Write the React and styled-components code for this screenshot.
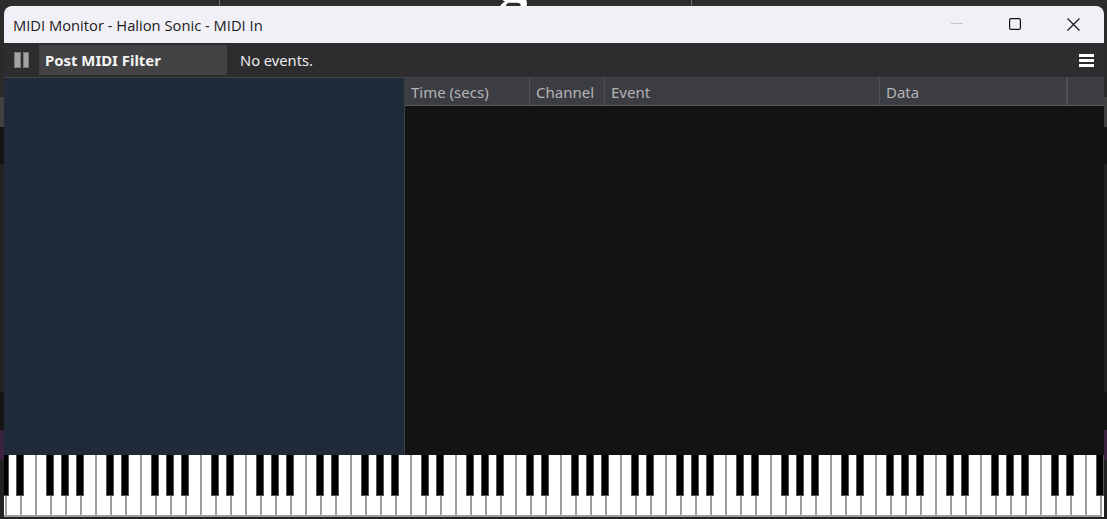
import React from 'react'
import styled, { createGlobalStyle } from 'styled-components'

const GlobalStyle = createGlobalStyle`
  html, body {
    margin: 0;
    padding: 0;
    background: #2a2a2a;
  }
  * {
    box-sizing: border-box;
  }
`

const FONT = `"Noto Sans", "Open Sans", sans-serif`

const Page = styled.div`
  width: 1107px;
  height: 519px;
  overflow: hidden;
  display: flex;
  flex-direction: column;
  background-color: #2a2a2a;
  background-image: linear-gradient(
    to bottom,
    #2a2a2a 0 97px,
    #414141 97px 127px,
    #141414 127px 164px,
    #222222 164px 392px,
    #141414 392px 430px,
    #3a2440 430px 460px,
    #222222 460px 519px
  );
`

const BackdropStrip = styled.div`
  height: 6px;
  flex: none;
  display: flex;
  overflow: hidden;
  background: #2d2d2d;
`

const BackdropCell = styled.div`
  width: ${(p) => p.$width}px;
  flex: none;
  height: 6px;
  border-right: ${(p) => (p.$line ? '1px solid #6a6a6a' : 'none')};
`

const HeadingTail = styled.div`
  flex: none;
  width: ${(p) => p.$width}px;
  height: 6px;
  overflow: hidden;
  font-family: "Liberation Serif", serif;
  font-weight: 700;
  font-size: 58px;
  line-height: 58px;
  color: #fff;
  text-align: center;

  span {
    display: block;
    margin-top: -47px;
  }
`

const Win = styled.div`
  width: 1100px;
  margin-left: 4px;
  height: 511px;
  flex: none;
  display: flex;
  flex-direction: column;
  background: #131313;
  border-radius: 8px 8px 0 0;
  overflow: hidden;
  font-family: ${FONT};
`

const TitleBar = styled.div`
  height: 37px;
  flex: none;
  display: flex;
  align-items: center;
  justify-content: space-between;
  background: #f1f0f7;
  padding-left: 9px;
`

const TitleText = styled.div`
  font-family: "Open Sans", sans-serif;
  font-size: 14.72px;
  color: #1b1b1b;
`

const WinButtons = styled.div`
  display: flex;
  align-items: center;
  height: 100%;
  padding-right: 1px;
`

const WinButton = styled.div`
  width: 58.5px;
  height: 100%;
  display: flex;
  align-items: center;
  justify-content: center;
  padding-bottom: 1px;
`

const Toolbar = styled.div`
  height: 35px;
  flex: none;
  display: flex;
  align-items: center;
  background: #2d2d2f;
  border-bottom: 1px solid #444446;
  padding-left: 10px;
`

const PauseIcon = styled.div`
  width: 15px;
  height: 16px;
  display: flex;
  gap: 2px;
  margin-right: 10px;
  flex: none;
`

const PauseBar = styled.div`
  flex: 1;
  background: #a3a3a3;
  border: 1px solid #7c7c7c;
`

const FilterButton = styled.div`
  width: 188px;
  height: 30px;
  flex: none;
  display: flex;
  align-items: center;
  padding-left: 6px;
  background: #434345;
  color: #f4f4f4;
  font-weight: 700;
  font-size: 14.9px;
`

const StatusText = styled.div`
  margin-left: 13px;
  font-size: 14.7px;
  color: #ececec;
`

const MenuIcon = styled.div`
  margin-left: auto;
  margin-right: 10px;
  width: 15px;
  display: flex;
  flex-direction: column;
  gap: 2px;
`

const MenuBar = styled.div`
  height: 3px;
  background: #fff;
`

const Body = styled.div`
  flex: 1;
  min-height: 0;
  display: flex;
`

const SidePanel = styled.div`
  width: 401px;
  flex: none;
  background: #1f2b39;
  border-right: 1px solid #3b4046;
`

const TablePanel = styled.div`
  flex: 1;
  display: flex;
  flex-direction: column;
  background: #131313;
`

const TableHeader = styled.div`
  height: 28px;
  flex: none;
  display: flex;
  background: #3c3d43;
  border-bottom: 1px solid #5c5c60;
`

const HeaderCell = styled.div`
  width: ${(p) => p.$width}px;
  flex: none;
  display: flex;
  align-items: center;
  padding-left: 6px;
  font-size: 15px;
  color: #b4b4b6;
  border-right: ${(p) => (p.$thick ? 2 : 1)}px solid #505056;
`

const Keyboard = styled.div`
  height: 62px;
  flex: none;
  display: flex;
  overflow: hidden;
  background: #fff;
`

const WhiteKey = styled.div`
  position: relative;
  flex: none;
  width: ${(p) => p.$width}px;
  height: 100%;
  background: #fff;
  border-right: 2px solid #9e9e9e;
  border-bottom: 2px solid #9e9e9e;
`

const BlackKey = styled.div`
  position: absolute;
  top: 0;
  right: -4px;
  width: 8px;
  height: 41px;
  z-index: 1;
  background: #000;
  border: 1px solid #555;
  border-top: none;
`

const COLUMNS = [
  { label: 'Time (secs)', width: 125 },
  { label: 'Channel', width: 75 },
  { label: 'Event', width: 275 },
  { label: 'Data', width: 188, thick: true },
]

// black key after a white key, 7 white keys to the octave
const BLACK_AFTER = [0, 1, 3, 4, 5]
const KEYS = Array.from({ length: 74 }, (_, i) => i)

const App = () => {
  return (
    <Page>
      <GlobalStyle />
      <BackdropStrip>
        <BackdropCell $width={220} $line />
        <BackdropCell $width={270} />
        <HeadingTail $width={46}>
          <span>g</span>
        </HeadingTail>
        <BackdropCell $width={156} $line />
      </BackdropStrip>
      <Win>
        <TitleBar>
          <TitleText>MIDI Monitor - Halion Sonic - MIDI In</TitleText>
          <WinButtons>
            <WinButton>
              <svg width="12" height="12" viewBox="0 0 12 12">
                <path d="M0 5.5H12" stroke="#c4c4c8" strokeWidth="1" />
              </svg>
            </WinButton>
            <WinButton>
              <svg width="12" height="12" viewBox="0 0 12 12">
                <rect x="0.6" y="0.6" width="10.8" height="10.8" rx="1.5" fill="none" stroke="#111" strokeWidth="1.2" />
              </svg>
            </WinButton>
            <WinButton>
              <svg width="13" height="13" viewBox="0 0 13 13">
                <path d="M0.5 0.5L12.5 12.5M12.5 0.5L0.5 12.5" stroke="#111" strokeWidth="1.1" />
              </svg>
            </WinButton>
          </WinButtons>
        </TitleBar>
        <Toolbar>
          <PauseIcon>
            <PauseBar />
            <PauseBar />
          </PauseIcon>
          <FilterButton>Post MIDI Filter</FilterButton>
          <StatusText>No events.</StatusText>
          <MenuIcon>
            <MenuBar />
            <MenuBar />
            <MenuBar />
          </MenuIcon>
        </Toolbar>
        <Body>
          <SidePanel />
          <TablePanel>
            <TableHeader>
              {COLUMNS.map((col) => (
                <HeaderCell key={col.label} $width={col.width} $thick={col.thick}>
                  {col.label}
                </HeaderCell>
              ))}
            </TableHeader>
          </TablePanel>
        </Body>
        <Keyboard>
          {KEYS.map((k) => (
            <WhiteKey key={k} $width={k === 0 ? 3 : 15}>
              {BLACK_AFTER.includes(k % 7) && <BlackKey />}
            </WhiteKey>
          ))}
        </Keyboard>
      </Win>
    </Page>
  )
}

export default App
